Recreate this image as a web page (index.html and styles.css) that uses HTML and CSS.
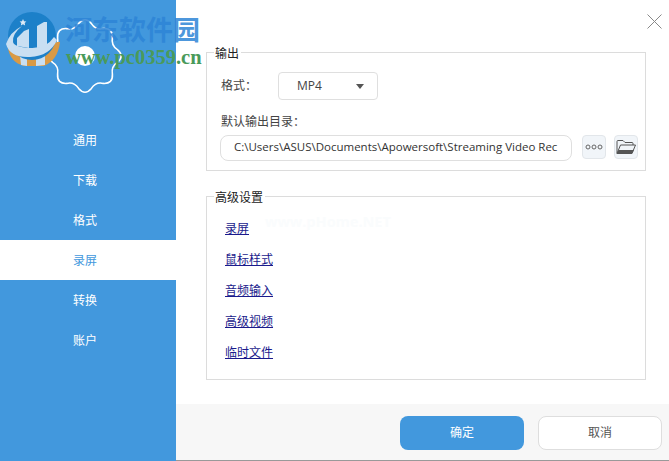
FILE: index.html
```html
<!DOCTYPE html>
<html lang="zh-CN">
<head>
<meta charset="utf-8">
<title>设置</title>
<link rel="stylesheet" href="styles.css">
</head>
<body>
<div class="app">
  <aside class="sidebar">
    <div class="brand">
      <svg class="gear" viewBox="-40 -40 80 80" width="80" height="80"><path class="gear-line" d="M32.4 6.4Q26 10.300 27.4 18.3Q28 28 18.3 27.4Q11 25.500 6.4 32.4Q0 40 -6.4 32.4Q-11 25.500 -18.3 27.4Q-28 28 -27.4 18.3Q-26 10.300 -32.4 6.4Q-40 0 -32.4 -6.4Q-26 -10.300 -27.4 -18.3Q-28 -28 -18.3 -27.4Q-11 -25.500 -6.4 -32.4Q0 -40 6.4 -32.4Q11 -25.500 18.3 -27.4Q28 -28 27.4 -18.3Q26 -10.300 32.4 -6.4Q40 0 32.4 6.4Z"/><circle class="gear-dot" r="10"/></svg>
    </div>
    <nav class="nav">
      <div class="nav-item">通用</div>
      <div class="nav-item">下载</div>
      <div class="nav-item">格式</div>
      <div class="nav-item active">录屏</div>
      <div class="nav-item">转换</div>
      <div class="nav-item">账户</div>
    </nav>
  </aside>
  <main class="main">
    <div class="topbar">
      <svg class="close" viewBox="0 0 15 15" width="15" height="15"><path d="M.5.5l14 14M14.500.5l-14 14"/></svg>
    </div>
    <div class="content">
      <section class="group group-output">
        <span class="legend">输出</span>
        <div class="format-row">
          <span class="label">格式：</span>
          <div class="select"><span>MP4</span><i class="caret"></i></div>
        </div>
        <div class="label dir-label">默认输出目录：</div>
        <div class="dir-row">
          <div class="path">C:\Users\ASUS\Documents\Apowersoft\Streaming Video Rec</div>
          <button class="icon-btn" type="button">
            <svg viewBox="0 0 18 8" width="18" height="8"><circle cx="3" cy="4" r="2"/><circle cx="9" cy="4" r="2"/><circle cx="15" cy="4" r="2"/></svg>
          </button>
          <button class="icon-btn" type="button">
            <svg viewBox="0 0 20 16" width="20" height="16"><path class="folder-body" d="M1 14.500V2.500q0-1 1-1h5l2 2h7q1 0 1 1v1.500"/><path class="folder-front" d="M1 14.500l3.500-8.500h15l-3.500 8.500z"/><path class="folder-base" d="M1 14.500l1.500-3.500h15.500l-2 3.500z"/></svg>
          </button>
        </div>
      </section>
      <section class="group group-advanced">
        <span class="legend">高级设置</span>
        <div class="links">
          <a href="#">录屏</a>
          <a href="#">鼠标样式</a>
          <a href="#">音频输入</a>
          <a href="#">高级视频</a>
          <a href="#">临时文件</a>
        </div>
        <span class="faint-mark">www.pHome.NET</span>
      </section>
    </div>
    <footer class="footer">
      <button class="btn btn-primary" type="button">确定</button>
      <button class="btn btn-plain" type="button">取消</button>
    </footer>
  </main>
  <div class="watermark">
    <svg class="wm-logo" viewBox="0 0 66 70" width="66" height="70">
      <path class="logo-gold" d="M8 48Q10 62 24 66L44 66Q58 60 60 42Z"/>
      <path class="logo-pale" d="M20 55L27 56L27 66L21 65ZM36 57L45 56L45 65L36 66Z"/>
      <circle class="logo-blue" cx="32" cy="36" r="24"/>
      <path class="logo-pale" d="M6 44Q10 58 30 57Q50 56 57 40L54 37Q46 49 30 48Q14 47 13 42Q12 34 22 26Q10 32 6 44Z"/>
      <path class="logo-pale" d="M17 46L17 38L24 31L29 29L29 48ZM37 48L37 26L44 22L47 22L47 47Z"/>
      <path class="logo-gold" d="M52 54Q58 48 60 42L57 42Q55 48 52 50Z"/>
      <path class="logo-star" d="M23 19l1 2.200 2.400.3-1.700 1.600.4 2.400-2.100-1.200-2.100 1.200.4-2.400-1.700-1.600 2.400-.3z"/>
    </svg>
    <div class="wm-title">河东软件园</div>
    <div class="wm-url">www.pc0359.cn</div>
  </div>
</div>
</body>
</html>
```
FILE: styles.css
```css
* { box-sizing: border-box; }
html, body { margin: 0; padding: 0; }
body {
  width: 669px;
  height: 461px;
  overflow: hidden;
  background: #fff;
  font-family: "Noto Sans CJK SC", "Open Sans", sans-serif;
  font-size: 12px;
  color: #555;
}
.app { position: relative; display: flex; width: 669px; height: 461px; }

.sidebar { width: 176px; flex: none; background: #4298dd; }
.brand { height: 120px; display: flex; justify-content: center; }
.gear { margin: 16px 0 0 -6px; }
.gear-line { fill: none; stroke: #fff; stroke-width: 1.6; }
.gear-dot { fill: #fff; }
.nav-item {
  height: 40px;
  line-height: 40px;
  padding-left: 73px;
  color: #fff;
}
.nav-item.active { background: #fff; color: #4298dd; }

.main { flex: 1; display: flex; flex-direction: column; min-width: 0; }
.topbar { height: 52px; flex: none; display: flex; justify-content: flex-end; padding: 14px 7px 0 0; }
.close { display: block; }
.close path { stroke: #888; stroke-width: 1; fill: none; }
.content { flex: 1; padding: 0 23px 0 30px; }

.group {
  position: relative;
  border: 1px solid #dcdcdc;
}
.legend {
  position: absolute;
  left: 7px;
  top: -8px;
  padding: 0 2px 0 1px;
  background: #fff;
  line-height: 16px;
  color: #222;
}
.group-output { height: 119px; padding: 19px 7px 0 13px; }
.group-advanced { height: 184px; margin-top: 25px; padding: 22px 0 0 18px; }

.format-row { display: flex; align-items: flex-start; }
.label { color: #444; margin-left: 1px; }
.format-row .label { width: 57px; line-height: 26px; }
.select {
  width: 100px;
  height: 28px;
  display: flex;
  align-items: center;
  justify-content: space-between;
  padding: 0 13px 2px 18px;
  border: 1px solid #dfdfdf;
  border-radius: 4px;
  color: #444;
  font-family: "Open Sans", sans-serif;
}
.caret { width: 0; height: 0; margin-top: 2px; border: 4px solid transparent; border-top: 5px solid #555; border-bottom: 0; }
.dir-label { margin-top: 12px; line-height: 18px; }
.dir-row { display: flex; align-items: flex-start; margin-top: 5px; }
.path {
  width: 352px;
  height: 26px;
  line-height: 22px;
  padding-left: 13px;
  margin-right: 10px;
  border: 1px solid #dfdfdf;
  border-radius: 8px;
  white-space: nowrap;
  overflow: hidden;
  color: #333;
  font-family: "Open Sans", sans-serif;
  font-size: 11.500px;
}
.icon-btn {
  width: 24px;
  height: 24px;
  padding: 0;
  margin-right: 8px;
  display: flex;
  align-items: center;
  justify-content: center;
  background: #f1f5f9;
  border: 1px solid #e2e6ea;
  border-radius: 4px;
}
.icon-btn:last-child { margin-right: 0; }
.icon-btn circle { fill: none; stroke: #666; stroke-width: 1; }
.folder-body, .folder-front { fill: none; stroke: #555; stroke-width: 1; }
.folder-base { fill: #555; }

.links { display: flex; flex-direction: column; gap: 13px; align-items: flex-start; }
.links a { color: #1a1a8c; line-height: 18px; text-decoration: underline; }
.faint-mark {
  position: absolute;
  left: 58px;
  top: 15px;
  color: #fafcfd;
  font-size: 14.500px;
  font-family: "Open Sans", sans-serif;
  font-weight: 700;
}

.footer {
  height: 57px;
  flex: none;
  display: flex;
  justify-content: flex-end;
  gap: 14px;
  padding: 12px 7px 0 0;
  background: #f7f7f7;
  border-bottom: 1px solid #999;
}
.btn {
  width: 124px;
  height: 34px;
  border-radius: 8px;
  font: inherit;
  padding: 0 0 4px;
}
.btn-primary { background: #4298dd; border: 0; color: #fff; }
.btn-plain { background: #fff; border: 1px solid #dedede; color: #555; }

.watermark { position: absolute; left: 0; top: 0; width: 210px; height: 70px; }
.wm-logo { position: absolute; left: 0; top: 0; }
.logo-blue { fill: #1c80c9; }
.logo-pale { fill: #c9dff2; }
.logo-gold { fill: #d99a45; }
.logo-star { fill: #dce9f5; }
.wm-title {
  position: absolute;
  left: 65px;
  top: 11px;
  color: rgba(45, 132, 214, .85);
  font-family: "Noto Sans CJK SC", sans-serif;
  font-size: 27px;
  font-weight: 700;
  line-height: 36px;
  white-space: nowrap;
}
.wm-url {
  position: absolute;
  left: 66px;
  top: 47px;
  color: #4a9a5a;
  font-family: "Liberation Serif", serif;
  font-size: 20.500px;
  font-weight: 700;
  line-height: 20px;
  white-space: nowrap;
}
```
